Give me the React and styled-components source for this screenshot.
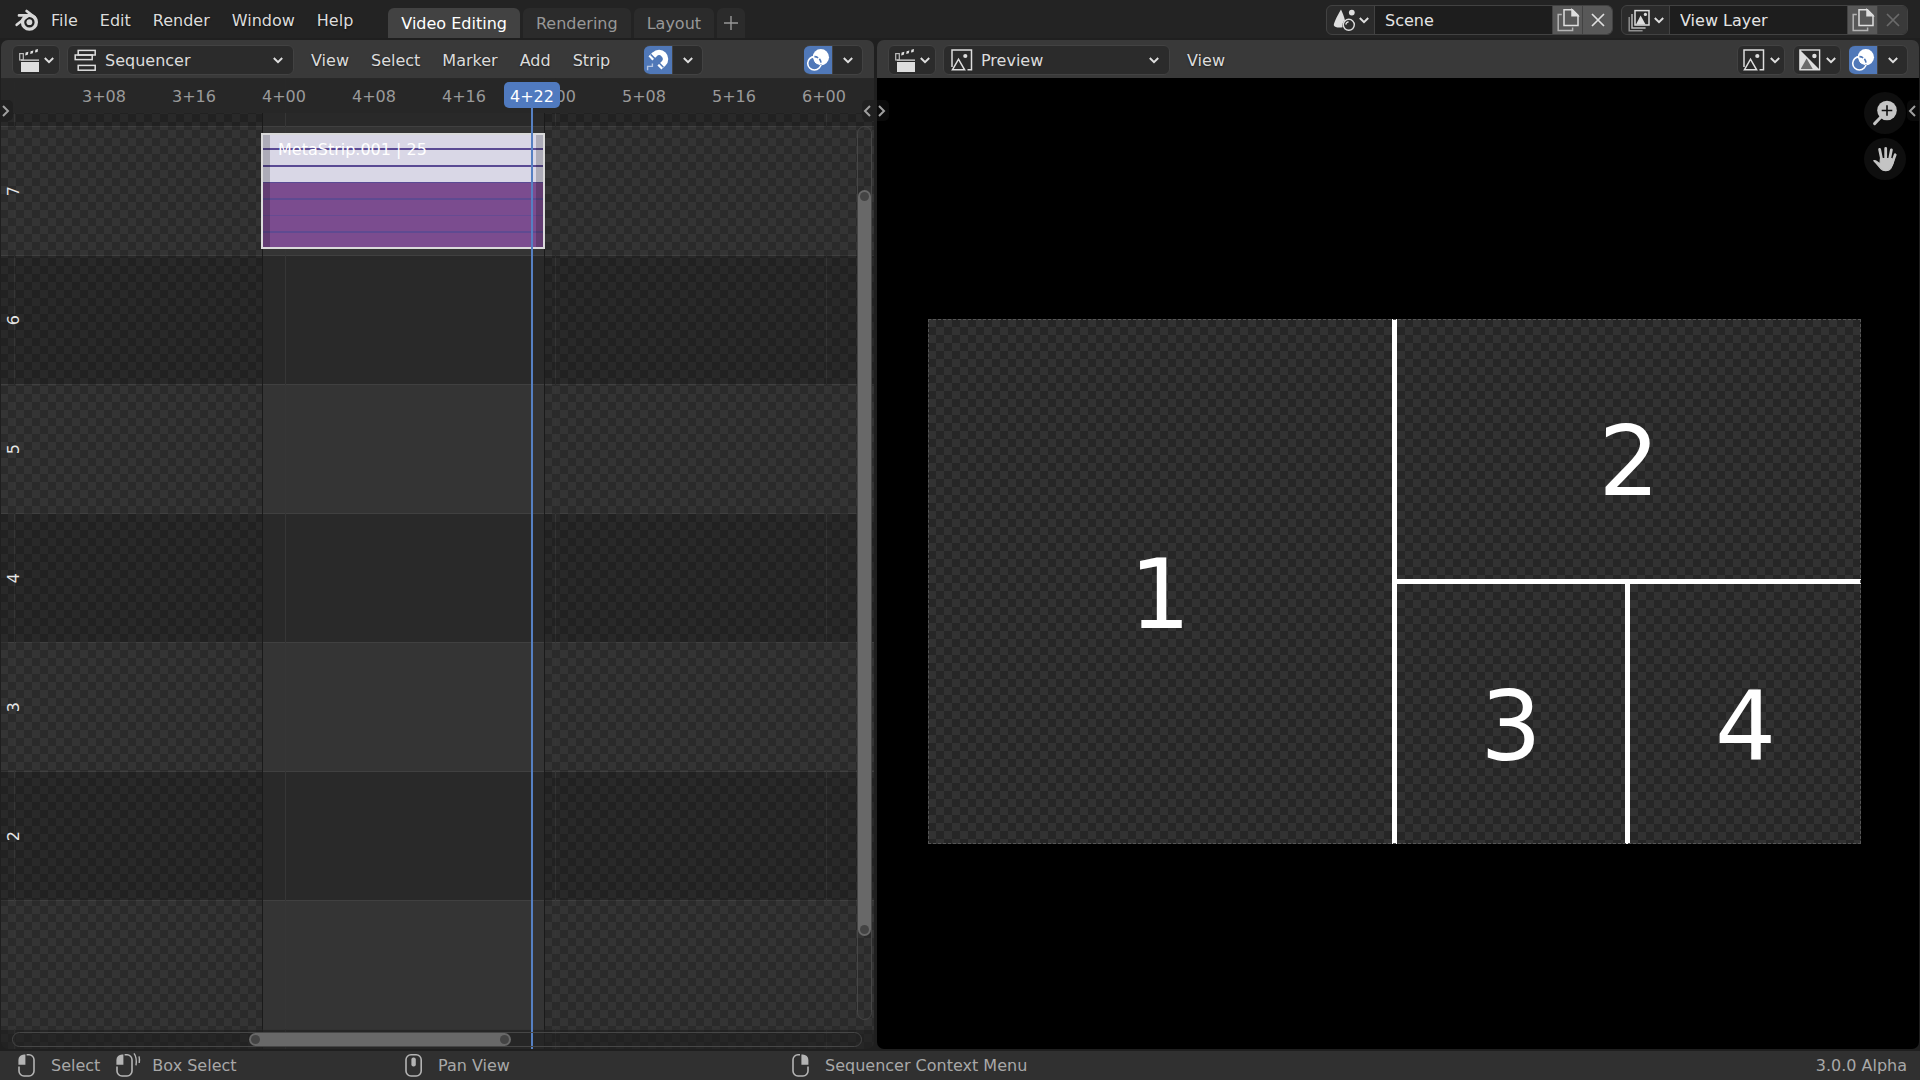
import React from "react";
import styled, { createGlobalStyle, css } from "styled-components";

const GlobalStyle = createGlobalStyle`
  *, *::before, *::after { box-sizing: border-box; }
  body { margin: 0; background: #1f1f1f; }
  body, button, input, select {
    font-family: "DejaVu Sans", Verdana, sans-serif;
    font-size: 16px;
    line-height: 20px;
  }
  button { margin: 0; padding: 0; border: 0; background: none; color: inherit; }
  svg { display: block; flex: none; overflow: visible; }
`;

const checker = (dark, light) => css`
  background-image: conic-gradient(${dark} 25%, ${light} 0 50%, ${dark} 0 75%, ${light} 0);
  background-size: 16px 16px;
`;

/* ---------- shell ---------- */

const Shell = styled.div`
  display: flex;
  flex-direction: column;
  height: 100vh;
  overflow: hidden;
  color: #dcdcdc;
  background: #1f1f1f;
`;

const TopBar = styled.header`
  display: flex;
  height: 38px;
  margin-bottom: 2px;
  padding: 0 12px 0 14px;
  background: #232323;
`;

const Logo = styled.div`
  padding-top: 8px;
  width: 37px;
`;

const Menu = styled.nav`
  display: flex;
  align-items: center;
  gap: 22px;
  height: 40px;
  padding-top: 2px;
`;

const MenuItem = styled.button`
  white-space: nowrap;
  text-shadow: 0 1px 2px rgba(0, 0, 0, 0.5);
`;

const Tabs = styled.div`
  display: flex;
  align-items: flex-end;
  gap: 3px;
  margin-left: 35px;
`;

const Tab = styled.button`
  height: 30px;
  padding: 2px 13px 0;
  border-radius: 6px 6px 0 0;
  white-space: nowrap;
  color: ${(p) => (p.$active ? "#ffffff" : "#989898")};
  background: ${(p) => (p.$active ? "#424242" : "#2b2b2b")};
`;

const AddTab = styled(Tab)`
  display: grid;
  place-items: center;
  width: 28px;
  padding: 0;
`;

const DataBlocks = styled.div`
  display: flex;
  align-items: center;
  gap: 8px;
  height: 40px;
  margin-left: auto;
`;

const DataBlock = styled.div`
  display: flex;
  width: 287px;
  height: 30px;
  overflow: hidden;
  border: 1px solid #424242;
  border-radius: 6px;
  background: #2b2b2b;
`;

const BlockType = styled.button`
  display: flex;
  align-items: center;
  justify-content: center;
  gap: 4px;
  width: 47px;
`;

const BlockName = styled.input`
  flex: 1;
  min-width: 0;
  padding: 2px 10px 0;
  border: solid #424242;
  border-width: 0 0 0 1px;
  outline: 0;
  color: #e4e4e4;
  background: #1d1d1d;
`;

const BlockAction = styled.button`
  display: grid;
  place-items: center;
  width: 30px;
  border-left: 1px solid #424242;
  color: ${(p) => (p.$dim ? "#6a6a6a" : "#e0e0e0")};
  background: ${(p) => (p.$dim ? "#3a3a3a" : "#585858")};
`;

const Workspace = styled.main`
  display: grid;
  grid-template-columns: minmax(0, 873fr) minmax(0, 1042fr);
  gap: 3px;
  flex: 1;
  min-height: 0;
  padding: 0 1px 2px;
`;

const Area = styled.section`
  display: flex;
  flex-direction: column;
  min-height: 0;
  overflow: hidden;
  border-radius: 7px;
`;

const AreaHeader = styled.div`
  display: flex;
  align-items: center;
  height: 38px;
  padding: 2px 11px 0;
  background: #393939;
`;

/* ---------- header controls ---------- */

const IconDropdown = styled.button`
  display: flex;
  align-items: center;
  justify-content: center;
  gap: 4px;
  width: 48px;
  height: 30px;
  border: 1px solid #424242;
  border-radius: 6px;
  background: #2b2b2b;
`;

const ModeBox = styled.label`
  display: grid;
  grid-template-columns: 24px 1fr 12px;
  align-items: center;
  width: 227px;
  height: 30px;
  margin: 0 17px 0 7px;
  padding: 0 8px 0 6px;
  border: 1px solid #424242;
  border-radius: 6px;
  background: #2b2b2b;

  & > svg { grid-row: 1; pointer-events: none; z-index: 1; }
  & > svg:first-child { grid-column: 1; }
  & > svg:last-child { grid-column: 3; }
`;

const ModeSelect = styled.select`
  grid-column: 1 / -1;
  grid-row: 1;
  height: 28px;
  padding: 2px 0 0 31px;
  border: 0;
  outline: 0;
  appearance: none;
  color: #dcdcdc;
  background: transparent;
`;

const ToggleGroup = styled.div`
  display: flex;
  width: 59px;
  height: 30px;
  overflow: hidden;
  border: 1px solid #424242;
  border-left: 0;
  border-radius: 6px;
  background: #2b2b2b;
`;

const Toggle = styled.button`
  width: 28px;
  height: 28px;
  color: #ffffff;
  background: #5078b8;
`;

const ToggleMore = styled.button`
  display: grid;
  flex: 1;
  place-items: center;
  border-left: 1px solid #424242;
`;

const SnapSlot = styled.div`
  margin-left: 34px;
`;

const RightTools = styled.div`
  display: flex;
  gap: 8px;
  margin-left: auto;
`;

/* ---------- sequencer ---------- */

const Timeline = styled.div`
  position: relative;
  flex: 1;
  min-height: 0;
  overflow: hidden;
`;

const Channels = styled.div`
  display: grid;
  grid-template-rows: 48px repeat(7, minmax(0, 1fr)) 20px;
  height: 100%;
`;

const Channel = styled.div`
  display: flex;
  align-items: center;
  border-top: 1px solid #404040;
  background: ${(p) => (p.$light ? "#343434" : "#292929")};
`;

const ChannelNumber = styled.span`
  position: relative;
  z-index: 3;
  width: 26px;
  line-height: 26px;
  writing-mode: vertical-rl;
  transform: rotate(180deg);
  color: #e6e6e6;
`;

const GridLines = styled.div`
  position: absolute;
  inset: 0 47px 0 13px;
  display: grid;
  grid-template-columns: repeat(3, 1fr);
  border-right: 1px solid #363636;
  pointer-events: none;

  & > i { border-left: 1px solid #363636; }
`;

const OutsideRange = styled.div`
  position: absolute;
  top: 0;
  bottom: 0;
  left: ${(p) => (p.$side === "before" ? "0" : "543px")};
  right: ${(p) => (p.$side === "after" ? "0" : "auto")};
  width: ${(p) => (p.$side === "before" ? "262px" : "auto")};
  border: solid #1a1a1a;
  border-width: ${(p) => (p.$side === "before" ? "0 1px 0 0" : "0 0 0 1px")};
  ${checker("rgba(0, 0, 0, 0.2)", "transparent")}
  background-position: 7px 4px;
`;

const Ruler = styled.div`
  position: absolute;
  inset: 0 0 auto 0;
  display: flex;
  align-items: center;
  height: 35px;
  padding: 2px 0 0 58px;
  background: rgba(40, 40, 40, 0.96);
`;

const Tick = styled.span`
  flex: 0 0 90px;
  text-align: center;
  color: #9a9a9a;
`;

const Strip = styled.div`
  position: absolute;
  top: 55px;
  left: 260px;
  width: 284px;
  height: 116px;
  border: 2px solid #dadada;
  background: linear-gradient(
    #d9d7e6 0 13px, #5a4a94 13px 15px,
    #d9d7e6 15px 30px, #5a4a94 30px 32px,
    #d9d7e6 32px 47px, #5a4a94 47px 48px,
    #7b4c8f 48px 63px, #5f4a91 63px 65px,
    #7b4c8f 65px 80px, #674b92 80px 81px,
    #7b4c8f 81px 96px, #5f4a91 96px 98px,
    #7b4c8f 98px
  );

  &::before, &::after {
    content: "";
    position: absolute;
    top: 0;
    bottom: 0;
    width: 7px;
    background: rgba(0, 0, 0, 0.2);
  }
  &::before { left: 0; }
  &::after { right: 0; }
`;

const StripName = styled.span`
  display: block;
  padding: 5px 0 0 15px;
  color: #ffffff;
`;

const Playhead = styled.div`
  position: absolute;
  top: 4px;
  bottom: 0;
  left: 503px;
  display: flex;
  justify-content: center;
  width: 56px;
  background: linear-gradient(#5680c2, #5680c2) center / 2px 100% no-repeat;
`;

const PlayheadLabel = styled.span`
  width: 100%;
  height: 26px;
  padding-top: 5px;
  border-radius: 5px;
  text-align: center;
  color: #ffffff;
  background: #507abf;
`;

const ScrollZone = styled.div`
  position: absolute;
  inset: auto 0 0 0;
  height: 20px;
  background: rgba(35, 35, 35, 0.5);
`;

const HTrack = styled.div`
  position: absolute;
  right: 12px;
  bottom: 2px;
  left: 11px;
  height: 15px;
  padding-left: 236px;
  border: 1px solid #464646;
  border-radius: 8px;
`;

const VTrack = styled.div`
  position: absolute;
  top: 48px;
  right: 2px;
  bottom: 29px;
  width: 15px;
  padding-top: 63px;
  border: 1px solid #464646;
  border-radius: 8px;
`;

const Thumb = styled.div`
  display: flex;
  flex-direction: ${(p) => (p.$vertical ? "column" : "row")};
  align-items: center;
  justify-content: space-between;
  width: ${(p) => (p.$vertical ? "13px" : "262px")};
  height: ${(p) => (p.$vertical ? "746px" : "13px")};
  padding: 2px;
  border-radius: 7px;
  background: #686868;

  &::before, &::after {
    content: "";
    width: 9px;
    height: 9px;
    border-radius: 50%;
    background: #444444;
  }
`;

const RegionTab = styled.button`
  position: absolute;
  top: 22px;
  ${(p) => (p.$side === "left" ? "left: 0;" : "right: 0;")}
  display: flex;
  align-items: center;
  justify-content: ${(p) => (p.$side === "left" ? "flex-start" : "flex-end")};
  width: 12px;
  height: 21px;
  padding: 0 3px 0 1px;
  border-radius: ${(p) => (p.$side === "left" ? "0 5px 5px 0" : "5px 0 0 5px")};
  color: #a0a0a0;
  background: ${(p) => (p.$onBlack ? "#0a0a0a" : "#202020")};
`;

/* ---------- preview ---------- */

const Viewer = styled.div`
  position: relative;
  display: flex;
  flex: 1;
  align-items: center;
  min-height: 0;
  padding: 36px 58px 0 51px;
  background: #000000;
`;

const Frame = styled.div`
  display: grid;
  grid-template-columns: 1fr 1fr;
  gap: 5px;
  width: 100%;
  aspect-ratio: 16 / 9;
  background: #ffffff;
  outline: 1px dashed #555555;
  outline-offset: -1px;
`;

const Stack = styled.div`
  display: grid;
  grid-template-rows: 1fr 1fr;
  gap: 5px;
  min-height: 0;
`;

const Pair = styled.div`
  display: grid;
  grid-template-columns: 228fr 231fr;
  gap: 5px;
  min-height: 0;
`;

const Cell = styled.div`
  display: grid;
  place-items: center;
  min-height: 0;
  padding-top: 26px;
  font-size: 96px;
  line-height: 96px;
  color: #ffffff;
  ${checker("#262626", "#323232")}
`;

const Gizmos = styled.div`
  position: absolute;
  top: 14px;
  right: 13px;
  display: grid;
  gap: 4px;
`;

const Gizmo = styled.button`
  width: 42px;
  height: 42px;
  border-radius: 50%;
  color: #c4c4c4;
  background: #0e0e0e;
`;

/* ---------- status bar ---------- */

const StatusBar = styled.footer`
  display: flex;
  align-items: center;
  height: 29px;
  padding: 0 13px 0 18px;
  color: #a8a8a8;
  background: #303030;
`;

const StatusGroup = styled.div`
  display: flex;
  flex: 0 1 387px;
  gap: 16px;
  white-space: nowrap;
`;

const Hint = styled.span`
  display: flex;
  align-items: center;
  gap: 16px;
`;

const Version = styled.span`
  margin-left: auto;
`;

/* ---------- icons ---------- */

const Chevron = () => (
  <svg width="10" height="8" viewBox="0 0 10 8" fill="none" stroke="#dedede" strokeWidth="2">
    <path d="M0.8 2L5 6.2L9.2 2" />
  </svg>
);

const Angle = ({ flip }) => (
  <svg width="8" height="12" viewBox="0 0 8 12" fill="none" stroke="currentColor" strokeWidth="2">
    <path d={flip ? "M7 1L2 6L7 11" : "M1 1L6 6L1 11"} />
  </svg>
);

const BlenderLogo = () => (
  <svg width="25" height="24" viewBox="0 0 25 24" fill="none" stroke="#d8d8d8" strokeLinecap="round" strokeLinejoin="round">
    <circle cx="15.4" cy="14.2" r="6.9" strokeWidth="3.4" />
    <circle cx="15.4" cy="14.2" r="2.9" fill="#d8d8d8" stroke="none" />
    <path d="M12.6 3L21 9.6M5 7.4H16M2.7 16.8L13.5 8.3" strokeWidth="2.7" />
  </svg>
);

const ClapperIcon = () => (
  <svg width="22" height="24" viewBox="0 0 22 24">
    <path d="M3 14H21V24H3ZM3 11.4H21V12.8H3Z" fill="#dedede" />
    <rect x="1.7" y="5.6" width="3.6" height="6.4" fill="none" stroke="#bdbdbd" strokeWidth="1.2" />
    <path d="M7.6 4.6L10.4 3.8L9.8 6.8L7.2 7.5ZM12.6 3.2L15.4 2.4L14.8 5.3L12.2 6ZM17.4 1.8L20 1L19.6 3.9L17 4.6Z" fill="#dedede" />
  </svg>
);

const SequencerIcon = () => (
  <svg width="24" height="24" viewBox="0 0 24 24" fill="none" stroke="#dedede" strokeWidth="1.5">
    <rect x="4.2" y="2.4" width="17" height="4.6" />
    <rect x="1.2" y="7" width="17" height="4.6" />
    <rect x="4.2" y="17.4" width="17" height="4.8" />
  </svg>
);

const ImageIcon = () => (
  <svg width="24" height="24" viewBox="0 0 24 24" fill="none" stroke="#dedede" strokeWidth="1.5">
    <path d="M2 19V2H21.5V21.8H17.5" />
    <path d="M2.4 21.8L8.5 11.2L14.6 21.8Z" />
    <circle cx="15.3" cy="8" r="2.1" fill="#dedede" stroke="none" />
  </svg>
);

const AlphaImageIcon = () => (
  <svg width="24" height="24" viewBox="0 0 24 24">
    <path d="M1.6 1.6L22 22H1.6Z" fill="#dedede" />
    <path d="M8.6 10.4L15 21.5H2.4Z" fill="#6b6b6b" />
    <rect x="2" y="2" width="19.6" height="19.8" fill="none" stroke="#dedede" strokeWidth="1.4" />
    <circle cx="16.4" cy="8" r="2.2" fill="#dedede" />
  </svg>
);

const MagnetIcon = () => (
  <svg width="28" height="28" viewBox="0 0 28 28" fill="none">
    <path d="M6.4 12.4L10.6 8.4A6.3 6.3 0 0 1 19.6 17.4L15.4 21.6" stroke="#fff" strokeWidth="5.6" />
    <path d="M6.6 8.4L11.6 13.4M14.4 16.2L19.4 21.2" stroke="#5078b8" strokeWidth="1.5" />
    <path d="M3.6 24.2V20.4H8.4V17.4" stroke="#b4c5e2" strokeWidth="1.4" />
  </svg>
);

const OverlayIcon = () => (
  <svg width="28" height="28" viewBox="0 0 28 28" fill="none">
    <circle cx="16.8" cy="11.3" r="8.2" fill="#fff" />
    <circle cx="10.4" cy="17.3" r="6.7" stroke="#fff" strokeWidth="1.6" />
    <path d="M10.4 10.6A6.7 6.7 0 0 1 16.9 18.6" stroke="#5078b8" strokeWidth="1.6" strokeDasharray="4 1.6" />
    <path d="M8.8 12.4A8.2 8.2 0 0 0 15.6 19.4" stroke="#5078b8" strokeWidth="1" />
  </svg>
);

const SceneIcon = () => (
  <svg width="22" height="24" viewBox="0 0 22 24">
    <path d="M8 1.4C9.4 4.5 11.3 8.5 12 12.6C9.6 14 9 16.6 9.6 19.2C5.6 20 1.4 19.2 0.8 17.2C0.6 14.6 6 4.6 8 1.4Z" fill="#dedede" />
    <circle cx="15.8" cy="16.8" r="5.5" fill="none" stroke="#dedede" strokeWidth="1.4" />
    <path d="M12.8 16.6A3 3 0 0 1 15.6 13.8" fill="none" stroke="#dedede" strokeWidth="1.2" />
    <circle cx="18.8" cy="4.6" r="2.9" fill="#dedede" />
  </svg>
);

const LayerIcon = () => (
  <svg width="22" height="24" viewBox="0 0 22 24" fill="none" stroke="#dedede" strokeWidth="1.5">
    <rect x="7" y="2.6" width="14" height="14.4" />
    <path d="M8 16.4L12.6 7.4L17.6 16.4Z" fill="#dedede" stroke="none" />
    <circle cx="17.4" cy="6.4" r="1.6" fill="#dedede" stroke="none" />
    <path d="M4 6V20H17.6" stroke="#bdbdbd" />
    <path d="M1.2 9V22.8H14.6" stroke="#909090" />
  </svg>
);

const CopyIcon = () => (
  <svg width="22" height="24" viewBox="0 0 22 24" fill="none" stroke="#dedede" strokeWidth="1.5">
    <path d="M7 1.8H15.4L21 7.4V17.4H7Z" />
    <path d="M15 1.8V7.8H21Z" fill="#dedede" />
    <path d="M4.8 6.6H1.2V22.6H15.6V19.6" stroke="#b4b4b4" />
  </svg>
);

const CrossIcon = () => (
  <svg width="14" height="14" viewBox="0 0 14 14" stroke="currentColor" strokeWidth="1.7">
    <path d="M1 1L13 13M13 1L1 13" />
  </svg>
);

const PlusIcon = () => (
  <svg width="14" height="14" viewBox="0 0 14 14" stroke="#989898" strokeWidth="1.4">
    <path d="M7 0V14M0 7H14" />
  </svg>
);

const ZoomIcon = () => (
  <svg width="42" height="42" viewBox="0 0 42 42">
    <circle cx="23" cy="18.5" r="9.8" fill="currentColor" />
    <path d="M17 25L10.6 31.6" stroke="currentColor" strokeWidth="3" strokeLinecap="round" />
    <path d="M23 13.2V23.8M17.7 18.5H28.3" stroke="#0e0e0e" strokeWidth="1.6" />
  </svg>
);

const HandIcon = () => (
  <svg width="42" height="42" viewBox="0 0 42 42" fill="none" stroke="currentColor" strokeLinecap="round">
    <path d="M17.8 22L15.6 11.4M21.7 21V10.4M25.4 22L27.4 11.8M28.2 25L31.2 16.8" strokeWidth="2.8" />
    <path d="M9.8 22.6C12.2 22 13.8 24.4 16 26L16.4 20.6H27.8L29.8 22.4C29.2 26 27.8 28.8 26.6 30.6C24.6 33.2 19.2 33.4 17 30.8C14.6 28.4 12.2 25.4 9.8 22.6Z" fill="currentColor" strokeWidth="1.2" strokeLinejoin="round" />
  </svg>
);

const MouseIcon = ({ button, drag }) => (
  <svg width={drag ? 20 : 17} height="23" viewBox={drag ? "0 0 20 23" : "0 0 17 23"} fill="none" stroke="#b4b4b4" strokeWidth="1.6">
    {button === "left" && (
      <>
        <path d="M8.6 0.8H11A5 5 0 0 1 16 5.8V17A5 5 0 0 1 11 22H6A5 5 0 0 1 1 17V12.6" />
        <path d="M7.4 0.4V10.8H0.4V6A5.6 5.6 0 0 1 6 0.4Z" fill="#b4b4b4" stroke="none" />
      </>
    )}
    {button === "right" && (
      <>
        <path d="M8 0.8H6A5 5 0 0 0 1 5.8V17A5 5 0 0 0 6 22H11A5 5 0 0 0 16 17V12.6" />
        <path d="M9.4 0.4V10.8H16.4V6A5.6 5.6 0 0 0 10.8 0.4Z" fill="#b4b4b4" stroke="none" />
      </>
    )}
    {button === "middle" && (
      <>
        <rect x="1" y="0.8" width="15.2" height="21.2" rx="5" />
        <rect x="6.4" y="3.6" width="4.4" height="8.8" rx="2" fill="#b4b4b4" stroke="none" />
      </>
    )}
    {drag && <path d="M18 -0.6C20 2 20.6 7 20 11.4M23 2.4C23.6 4.6 23.6 6.6 23.2 9" strokeWidth="1.4" />}
  </svg>
);

/* ---------- page ---------- */

const ticks = ["3+08", "3+16", "4+00", "4+08", "4+16", "5+00", "5+08", "5+16", "6+00"];
const channels = [8, 7, 6, 5, 4, 3, 2, 1, 0];

const Menus = ({ items, label }) => (
  <Menu aria-label={label}>
    {items.map((item) => (
      <MenuItem key={item}>{item}</MenuItem>
    ))}
  </Menu>
);

const DropdownIcon = ({ icon, label }) => (
  <IconDropdown aria-label={label} aria-haspopup="menu">
    {icon}
    <Chevron />
  </IconDropdown>
);

const Mode = ({ icon, label, value }) => (
  <ModeBox>
    {icon}
    <ModeSelect aria-label={label} defaultValue={value}>
      <option>Sequencer</option>
      <option>Preview</option>
    </ModeSelect>
    <Chevron />
  </ModeBox>
);

const IconToggle = ({ icon, label }) => (
  <ToggleGroup>
    <Toggle aria-label={label} aria-pressed="true">{icon}</Toggle>
    <ToggleMore aria-label={`${label} options`}>
      <Chevron />
    </ToggleMore>
  </ToggleGroup>
);

const Block = ({ icon, label, name, locked }) => (
  <DataBlock>
    <BlockType aria-label={`Browse ${label}`}>
      {icon}
      <Chevron />
    </BlockType>
    <BlockName aria-label={label} defaultValue={name} />
    <BlockAction aria-label={`New ${label}`}>
      <CopyIcon />
    </BlockAction>
    <BlockAction aria-label={`Remove ${label}`} $dim={locked} disabled={locked}>
      <CrossIcon />
    </BlockAction>
  </DataBlock>
);

export default function App() {
  return (
    <Shell>
      <GlobalStyle />
      <TopBar>
        <Logo>
          <BlenderLogo />
        </Logo>
        <Menus label="Main" items={["File", "Edit", "Render", "Window", "Help"]} />
        <Tabs>
          <Tab $active>Video Editing</Tab>
          <Tab>Rendering</Tab>
          <Tab>Layout</Tab>
          <AddTab aria-label="Add workspace">
            <PlusIcon />
          </AddTab>
        </Tabs>
        <DataBlocks>
          <Block icon={<SceneIcon />} label="Scene name" name="Scene" />
          <Block icon={<LayerIcon />} label="View layer name" name="View Layer" locked />
        </DataBlocks>
      </TopBar>

      <Workspace>
        <Area>
          <AreaHeader>
            <DropdownIcon icon={<ClapperIcon />} label="Editor type" />
            <Mode icon={<SequencerIcon />} label="Sequencer mode" value="Sequencer" />
            <Menus label="Sequencer" items={["View", "Select", "Marker", "Add", "Strip"]} />
            <SnapSlot>
              <IconToggle icon={<MagnetIcon />} label="Snap" />
            </SnapSlot>
            <RightTools>
              <IconToggle icon={<OverlayIcon />} label="Overlays" />
            </RightTools>
          </AreaHeader>
          <Timeline>
            <Channels>
              {channels.map((n) => (
                <Channel key={n} $light={n % 2 === 1}>
                  {n > 1 && n < 8 && <ChannelNumber>{n}</ChannelNumber>}
                </Channel>
              ))}
            </Channels>
            <GridLines>
              <i />
              <i />
              <i />
            </GridLines>
            <OutsideRange $side="before" />
            <OutsideRange $side="after" />
            <Strip>
              <StripName>MetaStrip.001 | 25</StripName>
            </Strip>
            <Ruler>
              {ticks.map((t) => (
                <Tick key={t}>{t}</Tick>
              ))}
            </Ruler>
            <ScrollZone />
            <Playhead>
              <PlayheadLabel>4+22</PlayheadLabel>
            </Playhead>
            <HTrack>
              <Thumb />
            </HTrack>
            <VTrack>
              <Thumb $vertical />
            </VTrack>
            <RegionTab $side="left" aria-label="Show toolbar">
              <Angle />
            </RegionTab>
            <RegionTab $side="right" aria-label="Show sidebar">
              <Angle flip />
            </RegionTab>
          </Timeline>
        </Area>

        <Area>
          <AreaHeader>
            <DropdownIcon icon={<ClapperIcon />} label="Editor type" />
            <Mode icon={<ImageIcon />} label="Preview mode" value="Preview" />
            <Menus label="Preview" items={["View"]} />
            <RightTools>
              <DropdownIcon icon={<ImageIcon />} label="Display mode" />
              <DropdownIcon icon={<AlphaImageIcon />} label="Display channels" />
              <IconToggle icon={<OverlayIcon />} label="Overlays" />
            </RightTools>
          </AreaHeader>
          <Viewer>
            <Frame>
              <Cell>1</Cell>
              <Stack>
                <Cell>2</Cell>
                <Pair>
                  <Cell>3</Cell>
                  <Cell>4</Cell>
                </Pair>
              </Stack>
            </Frame>
            <Gizmos>
              <Gizmo aria-label="Zoom view">
                <ZoomIcon />
              </Gizmo>
              <Gizmo aria-label="Move view">
                <HandIcon />
              </Gizmo>
            </Gizmos>
            <RegionTab $side="left" $onBlack aria-label="Show toolbar">
              <Angle />
            </RegionTab>
            <RegionTab $side="right" $onBlack aria-label="Show sidebar">
              <Angle flip />
            </RegionTab>
          </Viewer>
        </Area>
      </Workspace>

      <StatusBar>
        <StatusGroup>
          <Hint>
            <MouseIcon button="left" />
            Select
          </Hint>
          <Hint>
            <MouseIcon button="left" drag />
            Box Select
          </Hint>
        </StatusGroup>
        <StatusGroup>
          <Hint>
            <MouseIcon button="middle" />
            Pan View
          </Hint>
        </StatusGroup>
        <StatusGroup>
          <Hint>
            <MouseIcon button="right" />
            Sequencer Context Menu
          </Hint>
        </StatusGroup>
        <Version>3.0.0 Alpha</Version>
      </StatusBar>
    </Shell>
  );
}
